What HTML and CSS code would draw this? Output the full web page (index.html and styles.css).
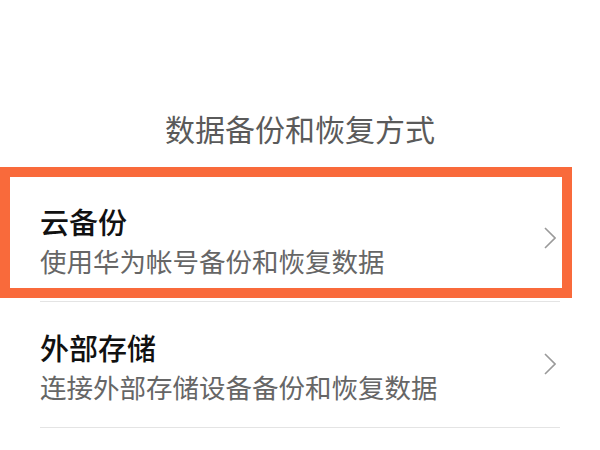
FILE: index.html
```html
<!DOCTYPE html>
<html lang="zh-CN">
<head>
<meta charset="utf-8">
<title>数据备份和恢复方式</title>
<link rel="stylesheet" href="styles.css">
</head>
<body>
<div class="page">
  <h1 class="header">数据备份和恢复方式</h1>
  <ul class="list">
    <li class="row">
      <div class="texts">
        <div class="title">云备份</div>
        <div class="sub">使用华为帐号备份和恢复数据</div>
      </div>
      <svg class="chev" width="12" height="22" viewBox="0 0 12 22"><polyline points="1,1 11,11 1,21" fill="none" stroke="#9a9a9a" stroke-width="1.6"/></svg>
    </li>
    <li class="row">
      <div class="texts">
        <div class="title">外部存储</div>
        <div class="sub">连接外部存储设备备份和恢复数据</div>
      </div>
      <svg class="chev" width="12" height="22" viewBox="0 0 12 22"><polyline points="1,1 11,11 1,21" fill="none" stroke="#9a9a9a" stroke-width="1.6"/></svg>
    </li>
  </ul>
  <div class="highlight"></div>
</div>
</body>
</html>
```
FILE: styles.css
```css
html, body {
  margin: 0;
  padding: 0;
  background: #ffffff;
}
body {
  font-family: "Noto Sans CJK SC", "Noto Sans", sans-serif;
  width: 600px;
  height: 450px;
  overflow: hidden;
}
.page {
  position: relative;
  height: 450px;
}
.header {
  margin: 0;
  padding-top: 108px;
  font-size: 30px;
  line-height: 40px;
  font-weight: 400;
  color: #5a5a5a;
  text-align: center;
}
.list {
  list-style: none;
  margin: 28px 0 0 0;
  padding: 0 40px;
}
.row {
  display: flex;
  align-items: center;
  justify-content: space-between;
  padding: 25px 0 20px 0;
  border-bottom: 1px solid #e4e4e4;
}
.texts {
  display: flex;
  flex-direction: column;
}
.title {
  font-size: 29px;
  line-height: 40px;
  font-weight: 500;
  color: #111111;
}
.sub {
  font-size: 26.5px;
  line-height: 40px;
  color: #666666;
}
.chev {
  display: block;
  margin-right: 4px;
  margin-bottom: 7px;
}
.highlight {
  position: absolute;
  left: 0;
  top: 167px;
  width: 572px;
  height: 131px;
  box-sizing: border-box;
  border: 10px solid #f96a3b;
}
```
